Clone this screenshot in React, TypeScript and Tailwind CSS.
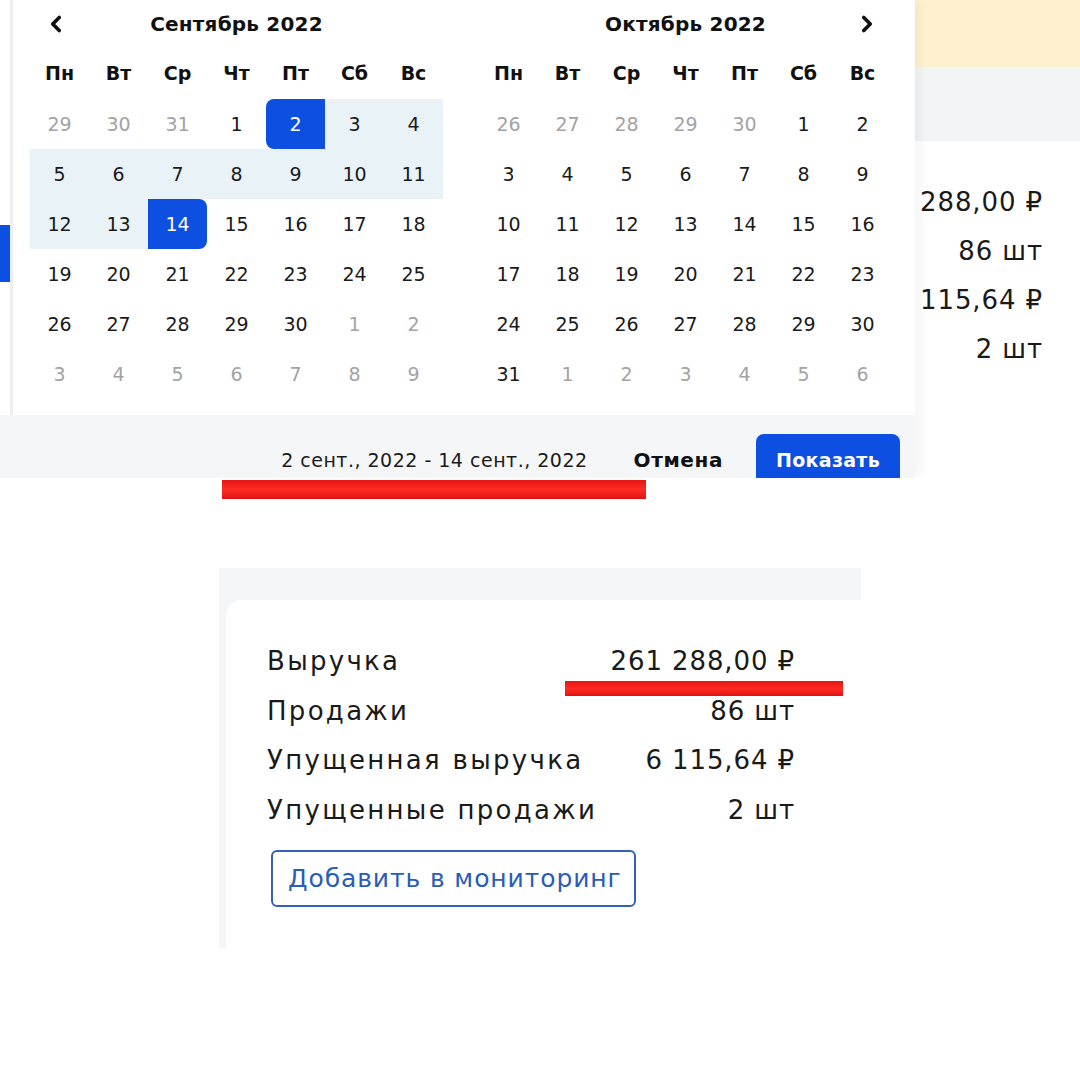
import { ChevronLeft, ChevronRight } from "lucide-react";

const WEEK = ["Пн", "Вт", "Ср", "Чт", "Пт", "Сб", "Вс"];

type Cell = { d: number; out: boolean };

// 6 weeks grid, monday first
function buildMonth(year: number, month: number): Cell[] {
  const first = new Date(year, month, 1);
  const shift = (first.getDay() + 6) % 7;
  const start = new Date(year, month, 1 - shift);
  const cells: Cell[] = [];
  for (let i = 0; i < 42; i++) {
    const dt = new Date(start.getFullYear(), start.getMonth(), start.getDate() + i);
    cells.push({ d: dt.getDate(), out: dt.getMonth() !== month });
  }
  return cells;
}

const DayCell = ({ cell, from, to }: { cell: Cell; from?: number; to?: number }) => {
  if (cell.out) {
    return <div className="h-[50px] flex items-center justify-center text-[19px] text-[#a3a3a3]">{cell.d}</div>;
  }
  if (from !== undefined && to !== undefined) {
    if (cell.d === from) {
      return <div className="h-[50px] flex items-center justify-center text-[19px] text-white bg-[#0d4fe0] rounded-l-[8px]">{cell.d}</div>;
    }
    if (cell.d === to) {
      return <div className="h-[50px] flex items-center justify-center text-[19px] text-white bg-[#0d4fe0] rounded-r-[8px]">{cell.d}</div>;
    }
    if (cell.d > from && cell.d < to) {
      return <div className="h-[50px] flex items-center justify-center text-[19px] text-[#1a1a1a] bg-[#e9f2f6]">{cell.d}</div>;
    }
  }
  return <div className="h-[50px] flex items-center justify-center text-[19px] text-[#1a1a1a]">{cell.d}</div>;
};

const Month = ({ title, cells, side, from, to }: { title: string; cells: Cell[]; side: "left" | "right"; from?: number; to?: number }) => (
  <div className="w-[413px]">
    <div className="grid grid-cols-7 h-[48px] items-center">
      <div className="flex justify-center pr-[8px]">
        {side === "left" && <ChevronLeft size={26} strokeWidth={3.4} className="text-[#111]" />}
      </div>
      <div className="col-span-5 text-center font-bold text-[20px] tracking-[0.2px] text-[#111]">{title}</div>
      <div className="flex justify-center pl-[8px]">
        {side === "right" && <ChevronRight size={26} strokeWidth={3.4} className="text-[#111]" />}
      </div>
    </div>
    <div className="grid grid-cols-7 h-[51px] items-center">
      {WEEK.map((w) => (
        <div key={w} className="text-center font-bold text-[19px] text-[#111]">{w}</div>
      ))}
    </div>
    <div className="grid grid-cols-7">
      {cells.map((c, i) => (
        <DayCell key={i} cell={c} from={from} to={to} />
      ))}
    </div>
  </div>
);

const stats = [
  ["Выручка", "261 288,00 ₽"],
  ["Продажи", "86 шт"],
  ["Упущенная выручка", "6 115,64 ₽"],
  ["Упущенные продажи", "2 шт"],
];

export default function App() {
  return (
    <div className="w-[1080px] h-[1080px] bg-white flex flex-col overflow-hidden font-['DejaVu_Sans',sans-serif] text-[#1a1a1a]">
      {/* top: page with the date popup over it */}
      <div className="relative h-[478px] shrink-0 overflow-hidden">
        <div className="flex h-full">
          <div className="w-[10px] shrink-0">
            <div className="mt-[225px] h-[57px] bg-[#0d4fe0]" />
          </div>
          <div className="w-[905px] shrink-0" />
          {/* visible strip of the page on the right, values cut by the popup edge */}
          <div className="flex-1 flex flex-col overflow-hidden">
            <div className="h-[67px] bg-[#fdf1cf]" />
            <div className="h-[74px] bg-[#f3f4f6]" />
            <div className="flex flex-col items-end pt-[37px] pr-[37px] text-[26px] tracking-[0.9px] whitespace-nowrap">
              {stats.map(([, v]) => (
                <div key={v} className="h-[49px] flex items-center">{v}</div>
              ))}
            </div>
          </div>
        </div>

        <div className="absolute left-0 top-0 w-[915px] h-[478px] flex flex-col shadow-[6px_0_10px_rgba(0,0,0,0.04)]">
          <div className="ml-[10px] h-[415px] bg-white border-l-[3px] border-[#eceef1] flex gap-[36px] pl-[17px]">
            <Month title="Сентябрь 2022" cells={buildMonth(2022, 8)} side="left" from={2} to={14} />
            <Month title="Октябрь 2022" cells={buildMonth(2022, 9)} side="right" />
          </div>
          <div className="h-[63px] bg-[#f5f6f8] flex items-start justify-end pt-[19px] pr-[15px] overflow-hidden">
            <div className="h-[52px] flex items-center text-[19px] tracking-[0.5px] text-[#1a1a1a]">2 сент., 2022 - 14 сент., 2022</div>
            <div className="h-[52px] flex items-center ml-[46px] text-[20px] tracking-[0.6px] font-bold text-[#111]">Отмена</div>
            <div className="h-[52px] ml-[33px] px-[20px] flex items-center bg-[#0d4fe0] rounded-[8px] text-white font-bold text-[19px] tracking-[0.3px]">Показать</div>
          </div>
        </div>
      </div>

      {/* marker stroke */}
      <div className="ml-[222px] mt-[2px] w-[424px] h-[19px] bg-gradient-to-b from-[#e41414] via-[#ff2a22] to-[#e01212]" />

      {/* bottom: stats card */}
      <div className="ml-[219px] mt-[69px] w-[642px] h-[380px] bg-[#f4f5f7] flex flex-col">
        <div className="relative ml-[7px] mt-[32px] flex-1 bg-white rounded-tl-[16px] pl-[41px] pt-[37px]">
          <div className="w-[528px] flex flex-col text-[26px]">
            {stats.map(([k, v]) => (
              <div key={k} className="h-[49.5px] flex items-center justify-between">
                <span className="tracking-[2.3px]">{k}</span>
                <span className="tracking-[0.9px]">{v}</span>
              </div>
            ))}
          </div>
          <div className="absolute left-[339px] top-[81px] w-[278px] h-[15px] bg-gradient-to-b from-[#e41414] via-[#ff2a22] to-[#e01212]" />
          <button className="mt-[15px] ml-[4px] w-[365px] h-[57px] border-2 border-[#3461b8] rounded-[6px] text-[#2a5cb8] text-[25px] tracking-[0.9px] text-left pl-[15px]">
            Добавить в мониторинг
          </button>
        </div>
      </div>
    </div>
  );
}
